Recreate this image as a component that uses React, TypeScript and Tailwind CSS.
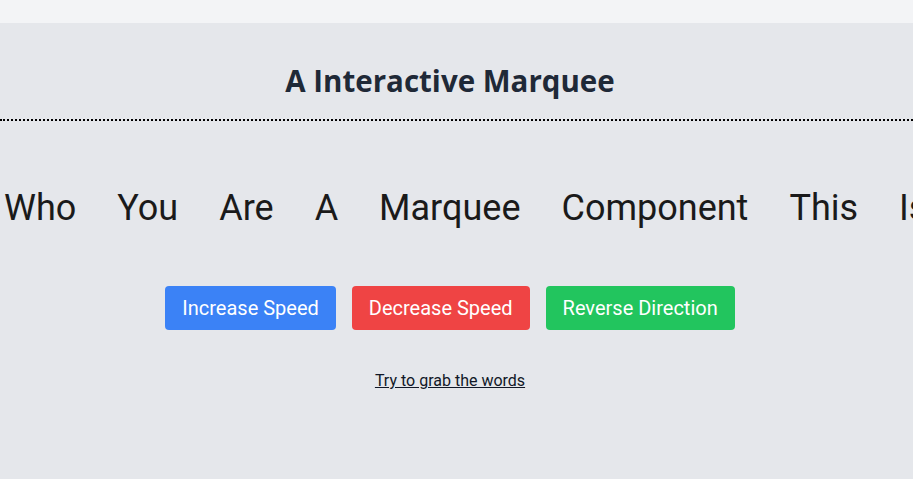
import React from 'react';

const words = ['Who', 'You', 'Are', 'A', 'Marquee', 'Component', 'This', 'Is', 'Who', 'You'];

const App = () => {
    return (
        <div className="min-h-screen w-full bg-[#f3f4f6]" style={{ fontFamily: 'Roboto, "Open Sans", sans-serif' }}>
            <div className="h-[23px] w-full bg-[#f3f4f6]" />
            <div className="w-full h-[456px] bg-[#e5e7eb] flex flex-col items-center">
                <h1 className="pt-10 pb-5 pr-[13px] w-full text-center text-[29.5px] leading-9 font-bold text-[#1f2937] border-b-2 border-dotted border-black" style={{ fontFamily: '"Open Sans", sans-serif' }}>
                    A Interactive Marquee
                </h1>
                <div className="w-full overflow-hidden mt-[67px]">
                    <div className="flex gap-[41px] whitespace-nowrap pl-[4px] text-4xl text-[#1a1a1a] select-none">
                        {words.map((w, i) => (
                            <span key={i}>{w}</span>
                        ))}
                    </div>
                </div>
                <div className="w-full pr-[13px] flex flex-col items-center">
                    <div className="flex gap-4 mt-[58px]">
                        <button className="px-[17px] py-2 rounded text-xl text-white bg-[#3b82f6]">Increase Speed</button>
                        <button className="px-[17px] py-2 rounded text-xl text-white bg-[#ef4444]">Decrease Speed</button>
                        <button className="px-[17px] py-2 rounded text-xl text-white bg-[#22c55e]">Reverse Direction</button>
                    </div>
                    <a className="mt-[39px] text-base underline text-[#111827]">Try to grab the words</a>
                </div>
            </div>
        </div>
    );
};

export default App;
